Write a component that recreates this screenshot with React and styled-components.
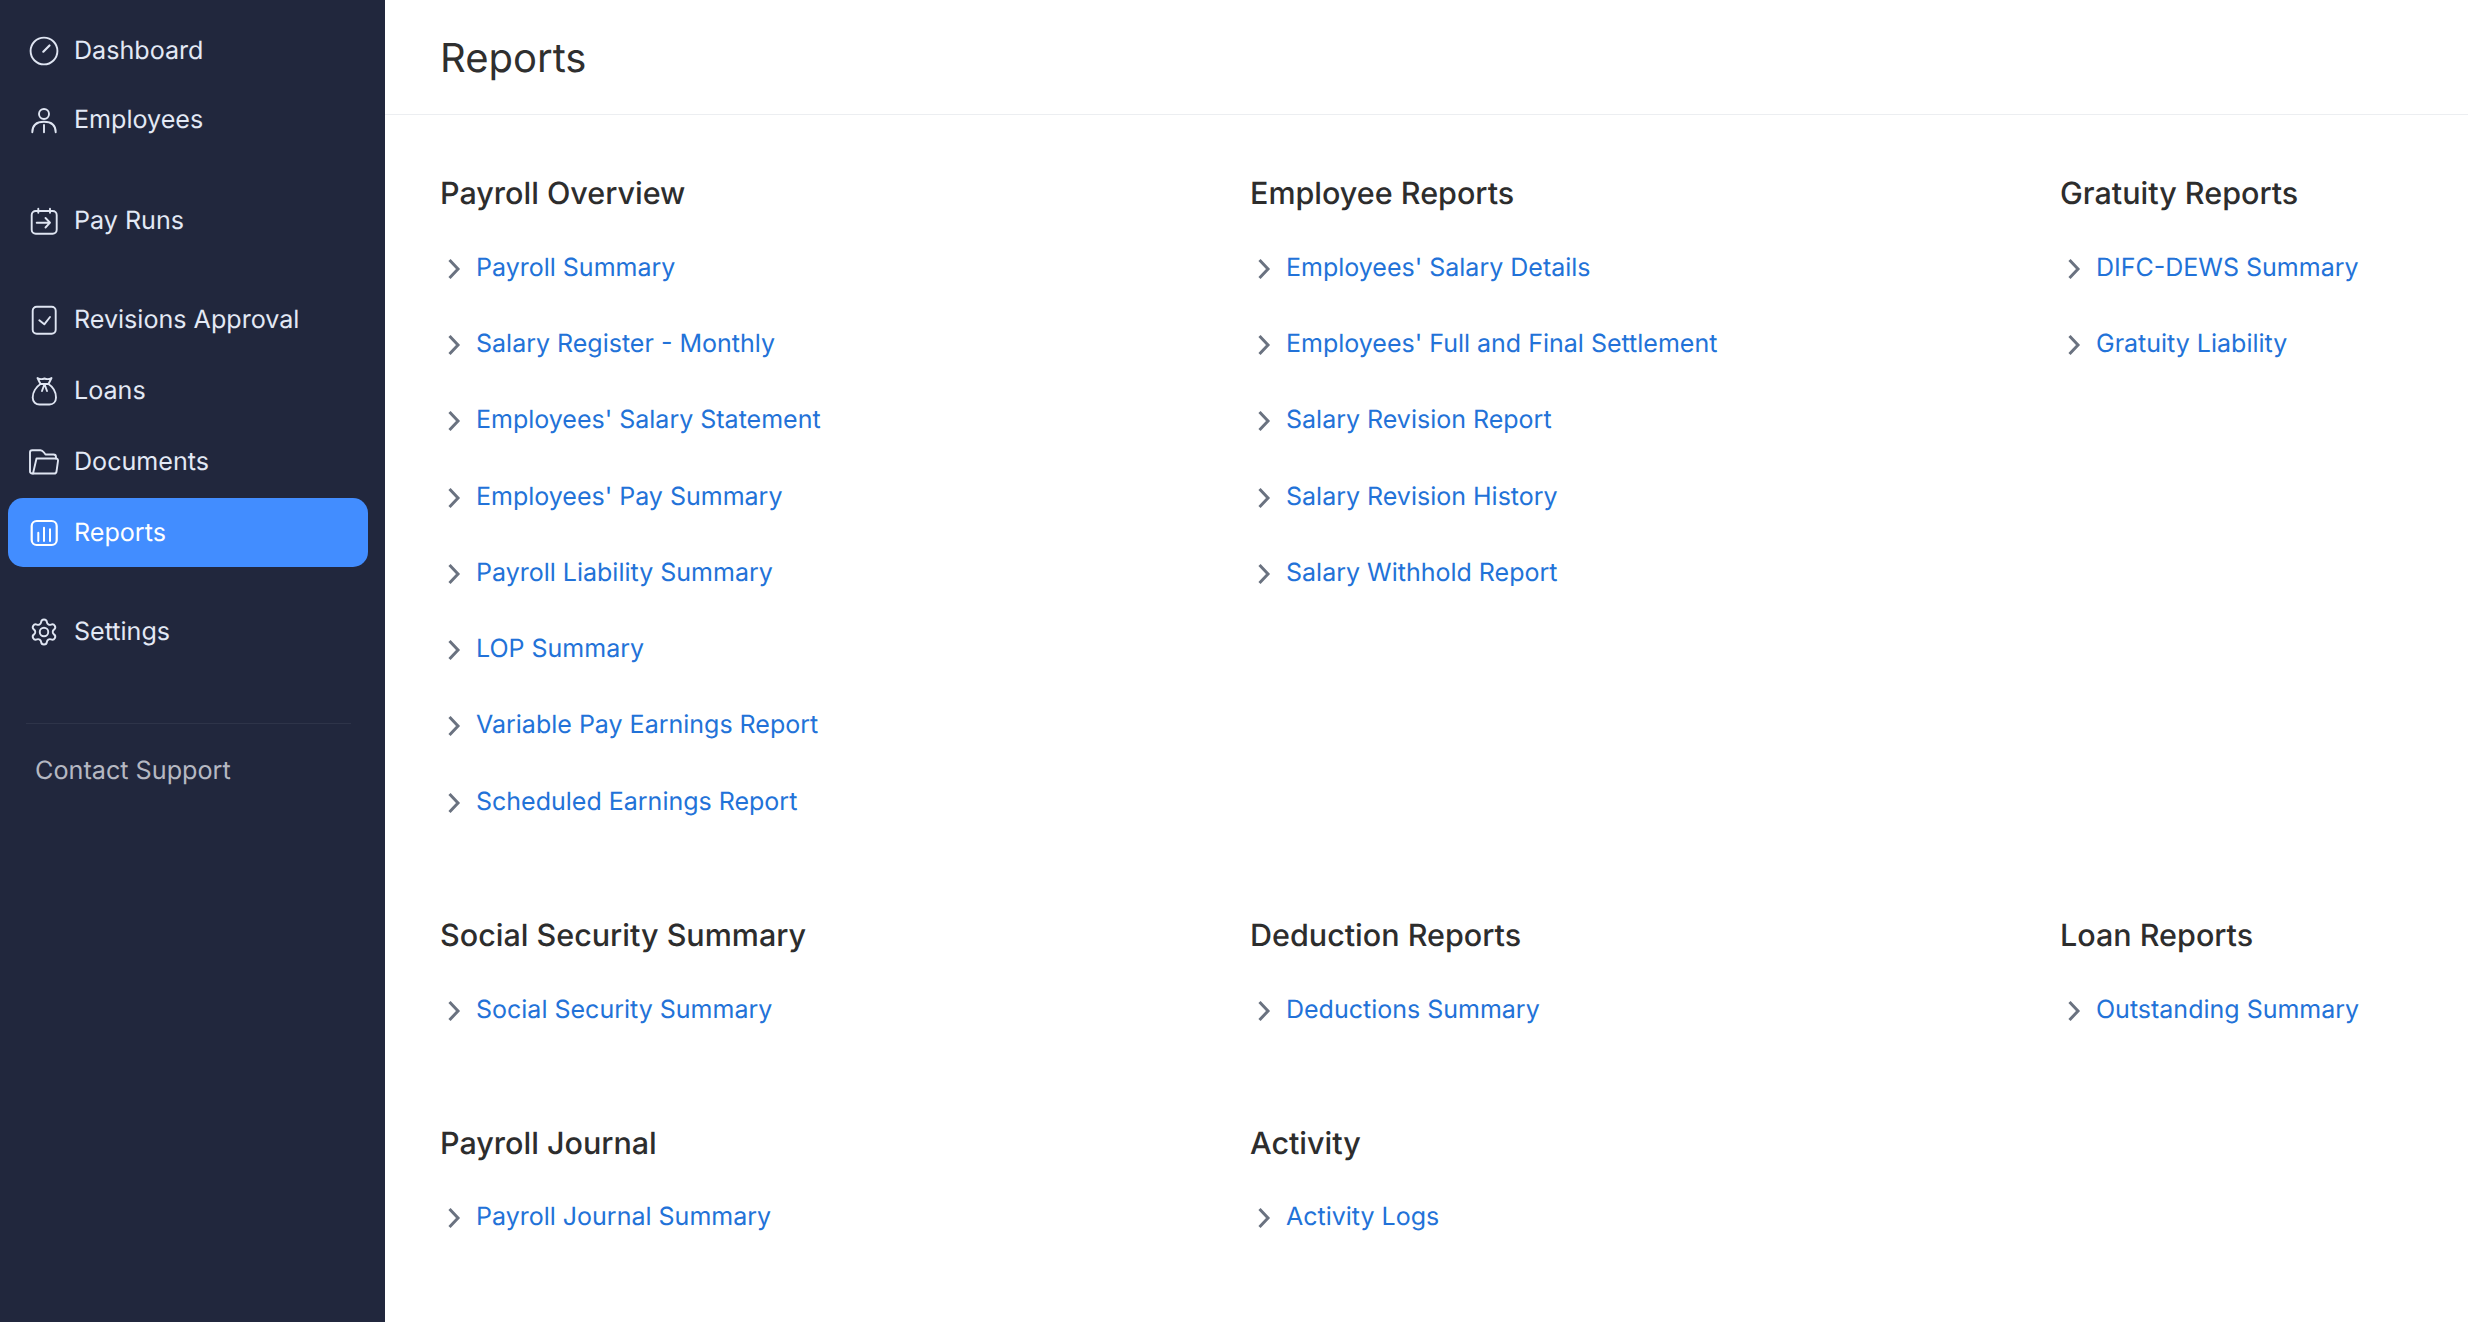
import React from "react";
import styled, { createGlobalStyle } from "styled-components";

const Global = createGlobalStyle`
  html, body { margin: 0; padding: 0; background: #fff; }
  body { font-family: Inter, "Liberation Sans", sans-serif; text-rendering: geometricPrecision; }
  * { box-sizing: border-box; }
`;
const Page = styled.div`display: flex; width: 2468px; height: 1322px; overflow: hidden;`;
const Sidebar = styled.aside`width: 385px; flex: none; background: #21273d; padding: 16px 17px 0 8px; display: flex; flex-direction: column;`;
const NavGroup = styled.div`display: flex; flex-direction: column; gap: ${p => p.$gap ?? 2}px; margin-bottom: ${p => p.$mb || 30}px;`;
const NavItem = styled.a`
  display: flex; align-items: center; gap: 15px; height: 69px; padding-left: 21px; border-radius: 15px;
  font-size: 25.1px; line-height: 32px; font-weight: 400;
  color: ${p => p.$active ? "#ffffff" : "#e3e9f5"};
  background: ${p => p.$active ? "#428dff" : "transparent"};
`;
const NavIcon = styled.svg`width: 30px; height: 30px; flex: none; fill: none; stroke: currentColor; stroke-width: 1.9; stroke-linecap: round; stroke-linejoin: round; color: ${p => p.$active ? "#fff" : "#dfe5f2"};`;
const Divider = styled.div`height: 1px; background: #2e3449; margin: 26px 17px 0 18px;`;
const Support = styled.div`padding: 31px 0 0 27px; font-size: 25.2px; line-height: 32px; color: #b5b8c2;`;
const Main = styled.main`flex: 1; min-width: 0;`;
const Header = styled.header`height: 115px; border-bottom: 1px solid #eceef1; padding: 2px 0 0 55px; display: flex; align-items: center;`;
const Title = styled.h1`margin: 0; font-size: 40px; line-height: 48px; font-weight: 400; color: #2f2f2f;`;
const Grid = styled.div`display: grid; grid-template-columns: 810px 810px 1fr; padding: 62px 0 0 55px; row-gap: 79px;`;
const Section = styled.section`display: flex; flex-direction: column;`;
const Heading = styled.h2`margin: 0 0 18.5px; font-size: 30.5px; line-height: 34px; font-weight: 500; color: #2d2d2d;`;
const LinkRow = styled.a`display: flex; align-items: center; height: 76.3px; gap: 14px; padding-left: 5px; font-size: 25px; color: #2272d8;`;
const Chevron = styled.svg`width: 17px; height: 24px; flex: none; fill: none; stroke: #6a7280; stroke-width: 3; margin-top: 2px;`;

const icons = {
  dash: <><circle cx="15" cy="15" r="13.4" /><path d="M14.300 15.700 20.500 9.500" strokeWidth="2.200" /></>,
  user: <><circle cx="15" cy="9" r="5" /><path d="M3.300 27.300C3.300 20 8 16.700 15 16.700S26.700 20 26.700 27.300M15 20v7.300" /></>,
  cal: <><rect x="2.700" y="5" width="25" height="22.700" rx="4" /><path d="M9.300 2.700V6.700M21 2.700V6.700M7.700 16.700H21M16.500 12 21 16.700 16.500 21.500" /></>,
  check: <><rect x="3.700" y="1.700" width="23" height="27" rx="4" /><path d="M10.300 15.300 15.300 19.300 21 12" /></>,
  bag: <><path d="M8.500 2C11 3.500 13 3.500 15.500 2.500 18 3.500 20 3.500 22.500 2L19.500 8C24 11 27 16.500 27 21.500 27 26 24 28.500 20.500 28.500H10.500C7 28.500 3.700 26 3.700 21.500 3.700 16.500 7 11 11.500 8Z" /><path d="M11.500 8H19.500M15.500 8 13 15M15.500 8 18 15" /></>,
  folder: <><path d="M4 26.500H3A2 2 0 0 1 1 24.500V5.500A2.200 2.200 0 0 1 3.200 3.300H11.500C13 3.300 14 4.200 15 5.500L16.500 7.500H24.500A2.500 2.500 0 0 1 27 10V11.500" /><path d="M7.500 11.500H27A2 2 0 0 1 29 13.800L27.500 24.500A2.300 2.300 0 0 1 25.200 26.500H4Z" /></>,
  chart: <><rect x="2.700" y="3" width="25" height="24" rx="5" strokeWidth="2.200" /><path d="M9.300 14.700V23M15 9.700V23M21 11.300V23" strokeWidth="2" /></>,
  gear: <g transform="scale(1.25)" strokeWidth="1.520"><path d="M9.671 4.136a2.34 2.34 0 0 1 4.659 0 2.34 2.34 0 0 0 3.319 1.915 2.34 2.34 0 0 1 2.33 4.033 2.34 2.34 0 0 0 0 3.831 2.34 2.34 0 0 1-2.33 4.033 2.34 2.34 0 0 0-3.319 1.915 2.34 2.34 0 0 1-4.659 0 2.34 2.34 0 0 0-3.32-1.915 2.34 2.34 0 0 1-2.33-4.033 2.34 2.34 0 0 0 0-3.831A2.34 2.34 0 0 1 6.35 6.051a2.34 2.34 0 0 0 3.319-1.915" /><circle cx="12" cy="12" r="3.400" /></g>,
};

const Nav = ({ icon, label, active }) => (
  <NavItem $active={active}>
    <NavIcon $active={active} viewBox="0 0 30 30">{icons[icon]}</NavIcon>
    {label}
  </NavItem>
);

const sections = [
  ["Payroll Overview", ["Payroll Summary", "Salary Register - Monthly", "Employees' Salary Statement", "Employees' Pay Summary", "Payroll Liability Summary", "LOP Summary", "Variable Pay Earnings Report", "Scheduled Earnings Report"]],
  ["Employee Reports", ["Employees' Salary Details", "Employees' Full and Final Settlement", "Salary Revision Report", "Salary Revision History", "Salary Withhold Report"]],
  ["Gratuity Reports", ["DIFC-DEWS Summary", "Gratuity Liability"]],
  ["Social Security Summary", ["Social Security Summary"]],
  ["Deduction Reports", ["Deductions Summary"]],
  ["Loan Reports", ["Outstanding Summary"]],
  ["Payroll Journal", ["Payroll Journal Summary"]],
  ["Activity", ["Activity Logs"]],
];

export default function App() {
  return (
    <Page>
      <Global />
      <Sidebar>
        <NavGroup $gap={0} $mb={32}>
          <Nav icon="dash" label="Dashboard" />
          <Nav icon="user" label="Employees" />
        </NavGroup>
        <NavGroup>
          <Nav icon="cal" label="Pay Runs" />
        </NavGroup>
        <NavGroup>
          <Nav icon="check" label="Revisions Approval" />
          <Nav icon="bag" label="Loans" />
          <Nav icon="folder" label="Documents" />
          <Nav icon="chart" label="Reports" active />
        </NavGroup>
        <NavGroup $mb={31}>
          <Nav icon="gear" label="Settings" />
        </NavGroup>
        <Divider />
        <Support>Contact Support</Support>
      </Sidebar>
      <Main>
        <Header><Title>Reports</Title></Header>
        <Grid>
          {sections.map(([h, links]) => (
            <Section key={h}>
              <Heading>{h}</Heading>
              {links.map(l => (
                <LinkRow key={l}>
                  <Chevron viewBox="0 0 17 24"><path d="M4.500 3 13 12 4.500 21" /></Chevron>
                  {l}
                </LinkRow>
              ))}
            </Section>
          ))}
        </Grid>
      </Main>
    </Page>
  );
}
